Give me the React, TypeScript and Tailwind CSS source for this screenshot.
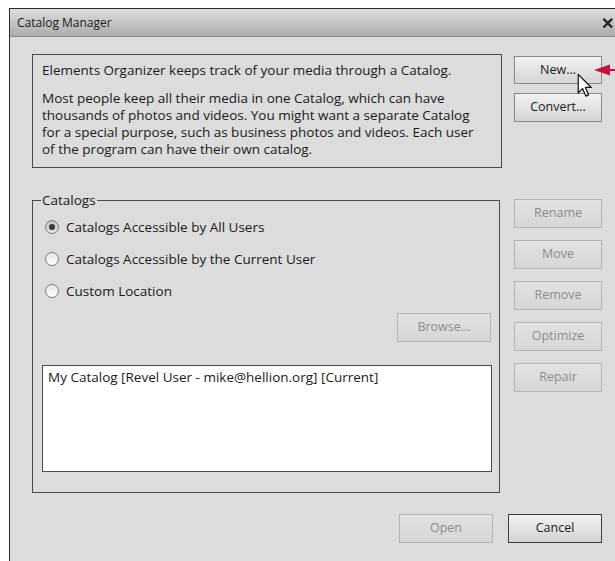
import React, { useState } from 'react';

type BtnProps = {
  label: string;
  disabled?: boolean;
  primary?: boolean;
  className?: string;
};

const DialogButton = ({ label, disabled, primary, className = '' }: BtnProps) => {
  const tone = disabled
    ? 'border-[#b4b4b4] text-[#8c8c8c] bg-gradient-to-b from-[#e2e2e2] to-[#d6d6d6]'
    : primary
      ? 'border-[#3c3c3c] text-[#1a1a1a] bg-gradient-to-b from-[#f2f2f2] to-[#d4d4d4]'
      : 'border-[#8a8a8a] text-[#1a1a1a] bg-gradient-to-b from-[#f2f2f2] to-[#d4d4d4]';
  return (
    <button
      disabled={disabled}
      className={`flex items-center justify-center border text-[12.5px] leading-none ${tone} ${className}`}
    >
      {label}
    </button>
  );
};

const Radio = ({ checked, label, onClick }: { checked: boolean; label: string; onClick: () => void }) => (
  <label className="flex items-center gap-[7px] h-[20px] cursor-default" onClick={onClick}>
    <span
      className={`w-[14px] h-[14px] rounded-full border border-[#7a7a7a] flex items-center justify-center ${
        checked ? 'bg-gradient-to-b from-[#c4c4c4] to-[#e4e4e4]' : 'bg-gradient-to-b from-[#e6e6e6] to-[#ffffff]'
      }`}
    >
      {checked && <span className="w-[6px] h-[6px] rounded-full bg-[#3a3a3a]" />}
    </span>
    <span className="text-[13.5px] text-[#1a1a1a]">{label}</span>
  </label>
);

const App = () => {
  const [scope, setScope] = useState(0);

  const scopes = [
    'Catalogs Accessible by All Users',
    'Catalogs Accessible by the Current User',
    'Custom Location',
  ];

  const actions = ['Rename', 'Move', 'Remove', 'Optimize', 'Repair'];

  return (
    <div
      className="relative w-[615px] h-[561px] overflow-hidden bg-white pt-[8px] pl-[9px]"
      style={{ fontFamily: '"Open Sans", "Noto Sans", sans-serif' }}
    >
      <div className="w-[612px] h-[560px] border-l border-t border-[#2a2a2a] bg-[#dcdcdd]">
        {/* Title bar */}
        <div className="h-[28px] flex items-center justify-between pl-[7px] pr-[7px] border-b border-[#8c8c8c] bg-gradient-to-b from-[#dedede] to-[#acacac]">
          <span className="text-[12px] text-[#1a1a1a]">Catalog Manager</span>
          <span className="text-[16px] font-bold text-[#222] leading-none">✕</span>
        </div>

        {/* Body */}
        <div className="pl-[22px] pr-[19px]">
          <div className="flex gap-[12px]">
            {/* Left column */}
            <div className="w-[470px]">
              <div className="mt-[17px] h-[114px] border border-[#4a4a4a] pl-[9px] pr-[14px] pt-[7px] text-[13.5px] text-[#1a1a1a]">
                <p className="leading-[17px]">Elements Organizer keeps track of your media through a Catalog.</p>
                <p className="mt-[11px] leading-[17px]">
                  Most people keep all their media in one Catalog, which can have thousands of photos and videos. You
                  might want a separate Catalog for a special purpose, such as business photos and videos. Each user
                  of the program can have their own catalog.
                </p>
              </div>

              <fieldset className="mt-[24px] w-[468px] h-[301px] border border-[#4a4a4a] pl-[9px] pr-[7px]">
                <legend className="text-[13.5px] text-[#1a1a1a] leading-[16px] px-[1px] ml-[-1px]">Catalogs</legend>
                <div className="pl-[3px] pt-[9px] flex flex-col gap-[12px]">
                  {scopes.map((s, i) => (
                    <Radio key={s} label={s} checked={scope === i} onClick={() => setScope(i)} />
                  ))}
                </div>
                <div className="flex justify-end mt-[12px] pr-[1px]">
                  <DialogButton label="Browse..." disabled className="w-[94px] h-[29px]" />
                </div>
                <div className="mt-[23px] h-[107px] border border-[#4a4a4a] bg-white px-[5px] pt-[1px] text-[13.5px] text-[#1a1a1a]">
                  My Catalog [Revel User - mike@hellion.org] [Current]
                </div>
              </fieldset>
            </div>

            {/* Right column */}
            <div className="w-[88px] pt-[19px] flex flex-col">
              <DialogButton label="New..." className="w-[88px] h-[28px]" />
              <DialogButton label="Convert..." className="w-[88px] h-[29px] mt-[9px]" />
              <div className="mt-[77px] flex flex-col gap-[12px]">
                {actions.map((a) => (
                  <DialogButton key={a} label={a} disabled className="w-[88px] h-[29px]" />
                ))}
              </div>
            </div>
          </div>

          {/* Footer */}
          <div className="flex justify-end gap-[15px] mt-[21px]">
            <DialogButton label="Open" disabled className="w-[94px] h-[29px]" />
            <DialogButton label="Cancel" primary className="w-[94px] h-[29px]" />
          </div>
        </div>
      </div>

      {/* Callout arrow */}
      <svg className="absolute left-[594px] top-[64px]" width="21" height="12" viewBox="0 0 21 12">
        <polygon points="0,6 16,0.5 16,11.5" fill="#c3123f" />
        <rect x="14" y="5" width="7" height="2" fill="#c3123f" />
      </svg>

      {/* Mouse pointer */}
      <svg className="absolute left-[577px] top-[73px]" width="16" height="25" viewBox="0 0 13 20">
        <path
          d="M1 1 L1 16 L4.5 12.5 L7.2 18.6 L9.4 17.6 L6.8 11.6 L11.6 11.6 Z"
          fill="#ffffff"
          stroke="#111"
          strokeWidth="1"
          strokeLinejoin="round"
        />
      </svg>
    </div>
  );
};

export default App;
